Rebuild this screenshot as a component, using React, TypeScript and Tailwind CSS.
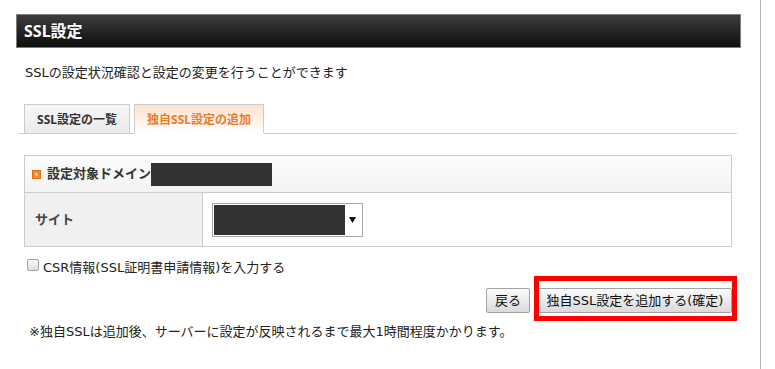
import React from "react";

function OrangeIcon() {
  return (
    <svg width="9" height="9" viewBox="0 0 9 9" className="shrink-0">
      <rect x="0" y="0" width="9" height="9" fill="#f08a24" />
      <rect x="0.5" y="0.5" width="8" height="8" fill="none" stroke="#e0701a" strokeWidth="1" />
      <polygon points="3.5,2.5 6,4.5 3.5,6.5" fill="#fff" />
    </svg>
  );
}

const reg = "font-['DejaVu_Sans','Noto_Sans_CJK_JP',sans-serif]";

export default function App() {
  return (
    <div className="flex min-h-[369px] w-[775px] bg-white text-[#333] font-['Noto_Sans','Noto_Sans_CJK_JP',sans-serif]">
      <div className="w-[761px] border-r border-[#b4b4b4] pl-[16px] pr-[19px] pt-[14px]">
        <div className="flex h-[34px] items-center border border-[#7c7c7c] bg-gradient-to-b from-[#3d3d3d] to-[#0f0f0f] pl-[7px] text-[16px] font-bold text-white">
          SSL設定
        </div>

        <p className="mt-[15px] pl-[9px] text-[13px] leading-[20px] text-[#222] font-['DejaVu_Sans','Noto_Sans_CJK_JP',sans-serif]">
          SSLの設定状況確認と設定の変更を行うことができます
        </p>

        <div className="ml-[3px] mr-[4px] mt-[21px] flex h-[30px] items-end gap-[4px] border-b border-[#cccccc] pl-[5px]">
          <div className="-mb-px flex h-[30px] w-[106px] items-center justify-center border border-[#cccccc] bg-gradient-to-b from-[#f7f7f7] to-[#ebebeb] pt-[2px] text-[12px] font-bold text-[#333]">
            SSL設定の一覧
          </div>
          <div className="-mb-px flex h-[30px] w-[130px] items-center justify-center border border-b-white border-[#cccccc] bg-gradient-to-b from-[#fde2cc] to-white pt-[2px] text-[12px] font-bold text-[#f07a28]">
            独自SSL設定の追加
          </div>
        </div>

        <div className="ml-[8px] mr-[9px] mt-[21px] border border-[#cccccc]">
          <div className="flex h-[37px] items-center gap-[6px] border-b border-[#cccccc] bg-gradient-to-b from-[#fdfdfd] to-[#f2f2f2] pl-[7px] text-[13px] font-bold text-[#333]">
            <OrangeIcon />
            <span className="flex items-center">
              設定対象ドメイン
              <span className="inline-block h-[23px] w-[121px] bg-[#333]" />
            </span>
          </div>
          <div className="flex h-[53px]">
            <div className="flex w-[178px] items-center border-r border-[#cccccc] bg-[#f0f0f0] pl-[10px] text-[13px] font-bold text-[#444]">
              サイト
            </div>
            <div className="flex items-center pl-[9px]">
              <div className="flex h-[34px] w-[151px] items-center border border-[#a9a9a9] bg-white p-[1px]">
                <div className="h-[30px] w-[131px] bg-[#333]" />
                <svg width="7" height="6" viewBox="0 0 7 6" className="ml-[4px]">
                  <polygon points="0,0 7,0 3.5,6" fill="#111" />
                </svg>
              </div>
            </div>
          </div>
        </div>

        <div className="ml-[11px] mt-[11px] flex h-[20px] items-start gap-[4px] text-[13px] leading-[20px] text-[#222] font-['DejaVu_Sans','Noto_Sans_CJK_JP',sans-serif]">
          <div className="mt-[1px] h-[12px] w-[12px] rounded-[2px] border border-[#a5a5a5] bg-gradient-to-b from-[#fafafa] to-[#dedede]" />
          <span>CSR情報(SSL証明書申請情報)を入力する</span>
        </div>

        <div className="mr-[9px] mt-[10px] flex justify-end gap-[8px] font-['DejaVu_Sans','Noto_Sans_CJK_JP',sans-serif]">
          <button className="flex h-[25px] w-[44px] items-center justify-center rounded-[2px] border border-[#a3a3a3] bg-gradient-to-b from-[#fbfbfb] to-[#dadada] text-[13px] text-[#111]">
            戻る
          </button>
          <div className="relative">
            <button className="flex h-[25px] w-[194px] items-center justify-center rounded-[2px] border border-[#a3a3a3] bg-gradient-to-b from-[#fbfbfb] to-[#dadada] text-[13px] text-[#111]">
              独自SSL設定を追加する(確定)
            </button>
            <div className="pointer-events-none absolute left-[-4px] top-[-12px] h-[45px] w-[203px] border-[5px] border-[#ff0000]" />
          </div>
        </div>

        <p className="ml-[13px] mt-[10px] text-[13px] leading-[18px] text-[#222] font-['DejaVu_Sans','Noto_Sans_CJK_JP',sans-serif]">
          ※独自SSLは追加後、サーバーに設定が反映されるまで最大1時間程度かかります。
        </p>
      </div>
    </div>
  );
}
